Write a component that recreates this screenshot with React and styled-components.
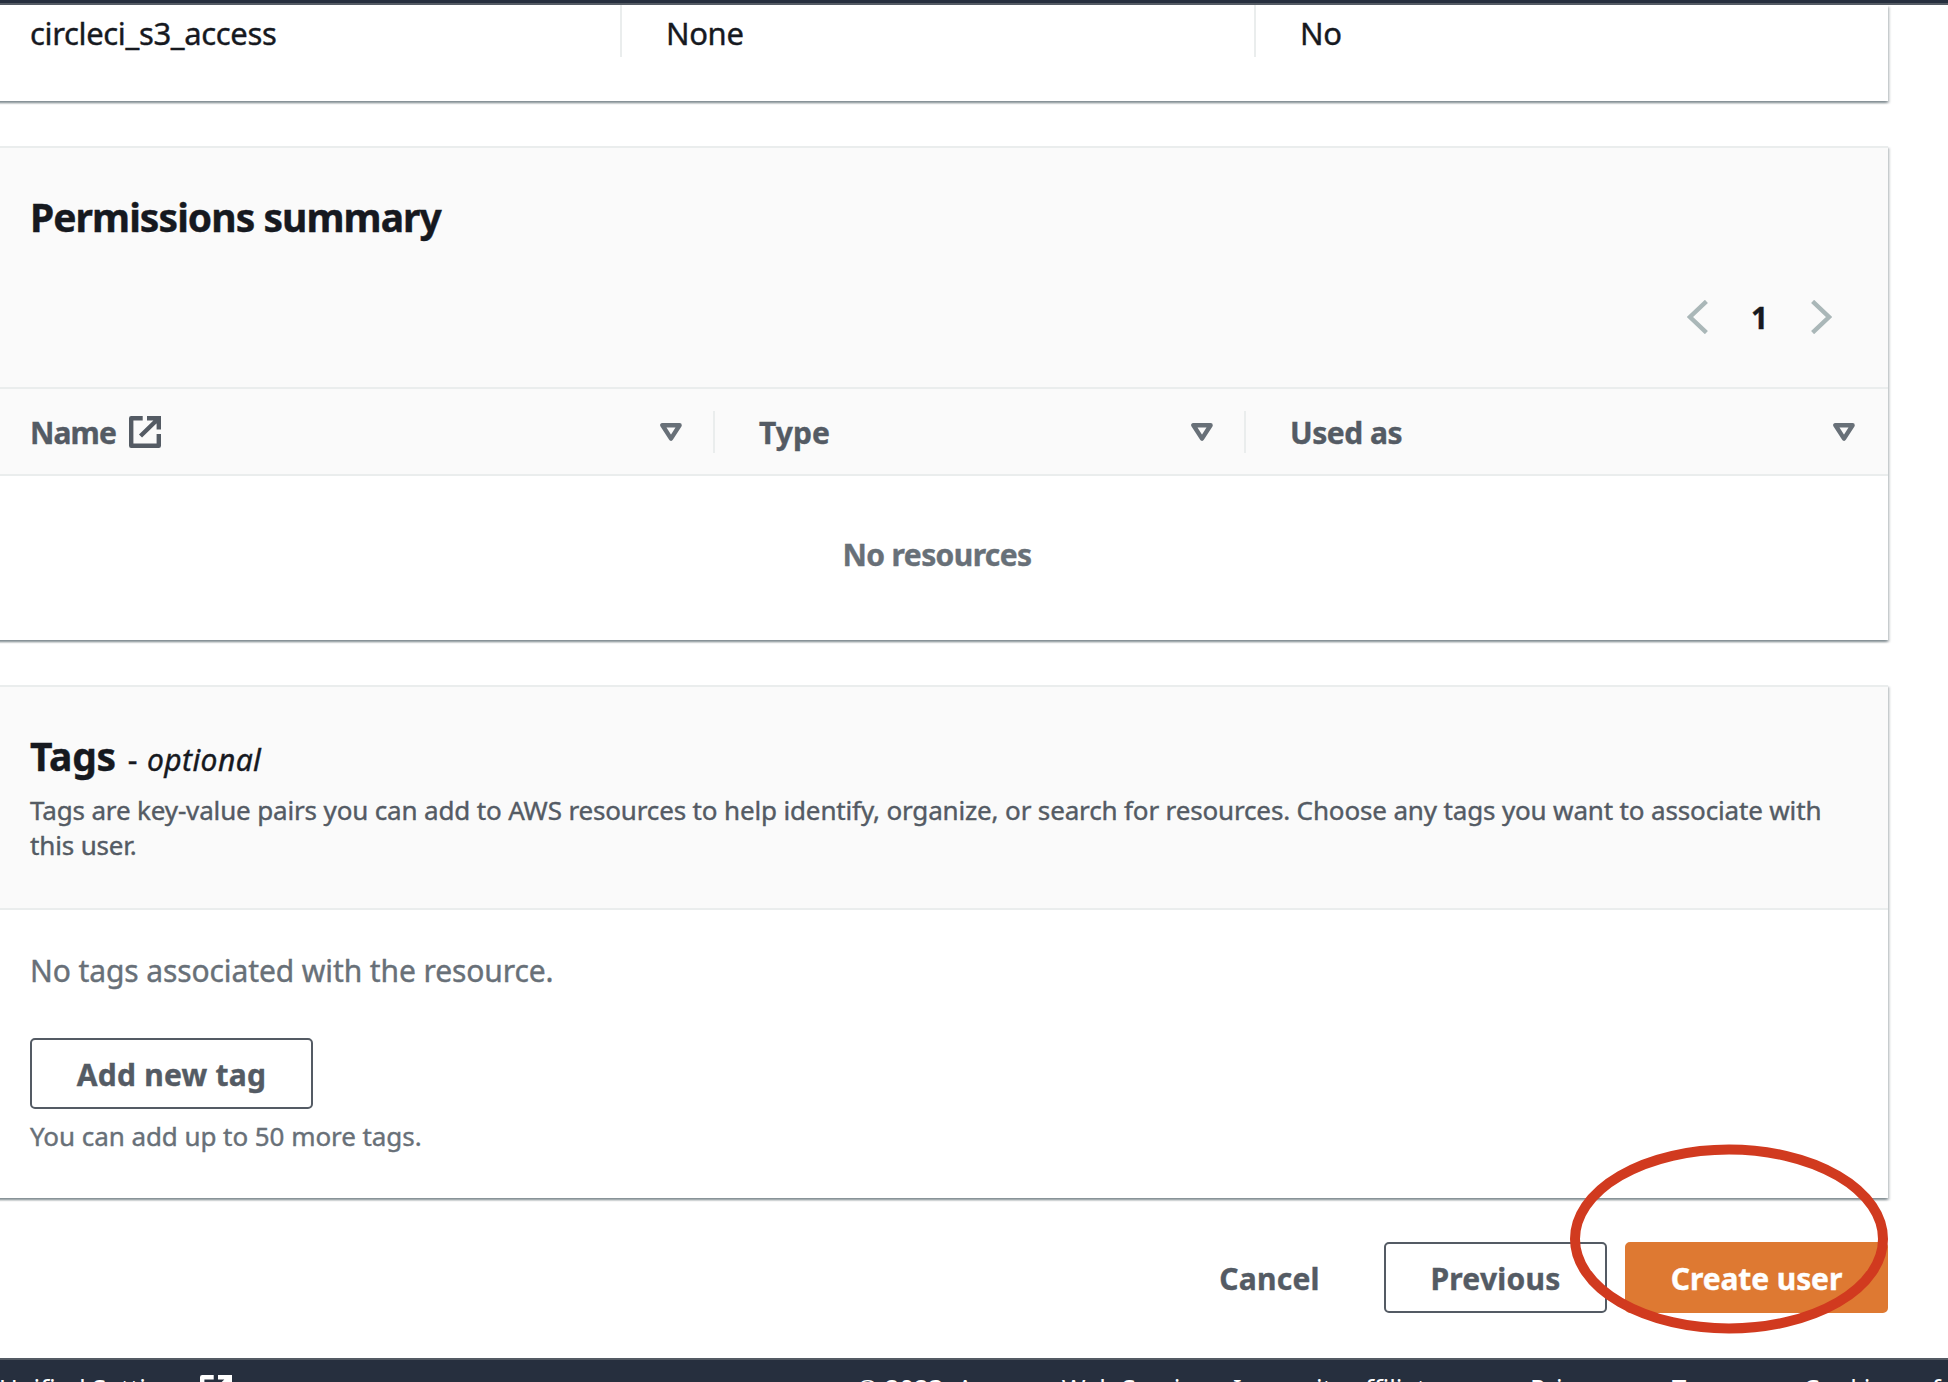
import React from 'react';
import styled, { createGlobalStyle } from 'styled-components';

const color = {
  ink: '#16191f',
  body: '#545b64',
  muted: '#687078',
  line: '#eaeded',
  navy: '#262f3e',
  header: '#fafafa',
  disabled: '#aab7b8',
  orange: '#de7932',
  red: '#d13a1f',
};

const GlobalStyle = createGlobalStyle`
  * { box-sizing: border-box; }
  body {
    margin: 0;
    background: #fff;
    color: ${color.ink};
    font-family: "Noto Sans", "Open Sans", sans-serif;
    font-size: 30px;
    line-height: 44px;
    -webkit-text-stroke: 0.4px currentColor;
  }
  h2, p { margin: 0; }
`;

const Page = styled.div`
  display: flex;
  flex-direction: column;
  width: 1948px;
  height: 1382px;
  overflow: hidden;
`;

const TopBar = styled.div`
  flex: none;
  height: 5px;
  background: ${color.navy};
  border-bottom: 2px solid ${color.body};
`;

/* The panels start a little past the left edge of the viewport. */
const Content = styled.main`
  flex: none;
  height: 1353px;
  width: 1902px;
  margin-left: -14px;
`;

const Panel = styled.section`
  height: ${(p) => p.$height}px;
  margin-bottom: ${(p) => p.$gap}px;
  background: #fff;
  border-top: ${(p) => (p.$open ? '0' : `2px solid ${color.line}`)};
  box-shadow:
    0 2px 2px 0 rgba(0, 28, 36, 0.3),
    2px 2px 2px 0 rgba(0, 28, 36, 0.15),
    -2px 2px 2px 0 rgba(0, 28, 36, 0.15);
`;

const PanelHeader = styled.header`
  height: ${(p) => p.$height}px;
  padding: 45px 56px 0 44px;
  background: ${color.header};
  border-bottom: 2px solid ${color.line};
`;

const Title = styled.h2`
  font-size: 39px;
  line-height: 48px;
  font-weight: 700;
  letter-spacing: ${(p) => p.$tracking}px;
`;

const Optional = styled.span`
  margin-left: 12px;
  font-size: 30px;
  font-weight: 400;
  letter-spacing: 0.4px;
  word-spacing: 1px;
`;

const Description = styled.p`
  width: 1830px;
  margin-top: 9px;
  color: ${color.body};
  font-size: 26px;
  line-height: 35px;
  letter-spacing: -0.15px;
`;

const SummaryRow = styled.div`
  display: grid;
  grid-template-columns: 634px 634px 1fr;
  height: 52px;
`;

const SummaryCell = styled.div`
  padding: 6px 0 0 44px;
  border-left: ${(p) => (p.$first ? '0' : `2px solid ${color.line}`)};
  font-size: 31px;
  letter-spacing: -0.35px;
`;

const Pagination = styled.div`
  display: flex;
  align-items: center;
  justify-content: flex-end;
  height: 40px;
  margin-top: 56px;
`;

const PageNumber = styled.span`
  width: 103px;
  padding-top: 2px;
  text-align: center;
  font-weight: 700;
`;

const TableHead = styled.div`
  display: grid;
  grid-template-columns: 727px 531px 1fr;
  align-items: center;
  height: 87px;
  padding-top: 1px;
  background: ${color.header};
  border-bottom: 2px solid ${color.line};
`;

const HeadCell = styled.div`
  display: flex;
  align-items: center;
  height: 42px;
  padding: 0 ${(p) => p.$right}px 0 44px;
  border-left: ${(p) => (p.$first ? '0' : `2px solid ${color.line}`)};
  color: ${color.body};
  font-weight: 700;
  letter-spacing: -0.5px;

  > svg { margin-left: auto; }
`;

const HeadLabel = styled.span`
  padding-top: 2px;
  letter-spacing: ${(p) => p.$tracking || -0.5}px;
`;

const NameLabel = styled.span`
  display: flex;
  align-items: center;
  gap: 13px;
`;

const EmptyState = styled.div`
  padding-top: 57px;
  color: ${color.muted};
  font-weight: 700;
  letter-spacing: -0.6px;
  text-align: center;
`;

const TagsBody = styled.div`
  display: flex;
  flex-direction: column;
  align-items: flex-start;
  padding: 39px 44px 0;
  color: ${color.muted};
`;

const TagsEmpty = styled.p`
  margin-bottom: 45px;
  letter-spacing: -0.1px;
`;

const Hint = styled.p`
  margin-top: 9px;
  font-size: 26px;
  line-height: 36px;
  letter-spacing: -0.06px;
`;

const Button = styled.button`
  flex: none;
  width: ${(p) => p.$width}px;
  height: 71px;
  padding: 2px 0 0;
  border: 2px solid ${(p) => (p.$primary ? color.orange : p.$link ? 'transparent' : color.body)};
  border-radius: 5px;
  background: ${(p) => (p.$primary ? color.orange : 'transparent')};
  color: ${(p) => (p.$primary ? '#fff' : color.body)};
  font: 700 30px/44px "Noto Sans", "Open Sans", sans-serif;
  letter-spacing: ${(p) => (p.$primary ? -0.1 : 0.25)}px;
`;

const Actions = styled.div`
  position: relative;
  display: flex;
  justify-content: flex-end;
  gap: 18px;
`;

const Highlight = styled.svg`
  position: absolute;
  right: 0;
  top: -98px;
  pointer-events: none;
`;

const Footer = styled.footer`
  flex: none;
  display: flex;
  height: 24px;
  padding-top: 11px;
  overflow: hidden;
  background: ${color.navy};
  border-top: 2px solid ${color.body};
  color: #fff;
  font-size: 25.6px;
  line-height: 36px;
  white-space: nowrap;
  -webkit-text-stroke: 0;
`;

const FooterLink = styled.span`
  flex: none;
  display: flex;
  align-items: flex-start;
  gap: 10px;
  width: ${(p) => p.$width}px;

  svg { margin-top: 4px; }
`;

const FooterSettings = styled(FooterLink)`
  margin-left: -1px;
`;

function ExternalIcon() {
  return (
    <svg width="32" height="32" viewBox="0 0 32 32" fill="none" stroke="currentColor" strokeWidth="4.4">
      <path d="M29.8 18V29.8H2.2V2.2H13.7" strokeLinejoin="round" />
      <path d="M18 2.2H29.8V13.6M11.5 20L29 3" />
    </svg>
  );
}

function SortIcon() {
  return (
    <svg width="22" height="18" viewBox="0 0 22 18" fill="none" stroke={color.muted} strokeWidth="4.4" strokeLinejoin="round">
      <path d="M2.4 2.2H19.6L11 15.6Z" />
    </svg>
  );
}

function Chevron({ next }) {
  return (
    <svg width="21" height="34" viewBox="0 0 21 34" fill="none" stroke={color.disabled} strokeWidth="4.4">
      <path d={next ? 'M1.6 1.4L18 17L1.6 32.6' : 'M19.4 1.4L3 17L19.4 32.6'} />
    </svg>
  );
}

export default function App() {
  return (
    <Page>
      <GlobalStyle />
      <TopBar />
      <Content>
        <Panel $open $height={96} $gap={45}>
          <SummaryRow>
            <SummaryCell $first>circleci_s3_access</SummaryCell>
            <SummaryCell>None</SummaryCell>
            <SummaryCell>No</SummaryCell>
          </SummaryRow>
        </Panel>

        <Panel $height={494} $gap={45}>
          <PanelHeader $height={241}>
            <Title $tracking={-0.95}>Permissions summary</Title>
            <Pagination>
              <Chevron />
              <PageNumber>1</PageNumber>
              <Chevron next />
            </Pagination>
          </PanelHeader>
          <TableHead>
            <HeadCell $first $right={31}>
              <NameLabel>
                <HeadLabel $tracking={-0.9}>Name</HeadLabel>
                <ExternalIcon />
              </NameLabel>
              <SortIcon />
            </HeadCell>
            <HeadCell $right={31}>
              <HeadLabel $tracking={0.1}>Type</HeadLabel>
              <SortIcon />
            </HeadCell>
            <HeadCell $right={33}>
              <HeadLabel>Used as</HeadLabel>
              <SortIcon />
            </HeadCell>
          </TableHead>
          <EmptyState>No resources</EmptyState>
        </Panel>

        <Panel $height={513} $gap={44}>
          <PanelHeader $height={223}>
            <Title $tracking={-0.3}>
              Tags<Optional>- <em>optional</em></Optional>
            </Title>
            <Description>
              Tags are key-value pairs you can add to AWS resources to help identify, organize, or search for
              resources. Choose any tags you want to associate with this user.
            </Description>
          </PanelHeader>
          <TagsBody>
            <TagsEmpty>No tags associated with the resource.</TagsEmpty>
            <Button $width={283}>Add new tag</Button>
            <Hint>You can add up to 50 more tags.</Hint>
          </TagsBody>
        </Panel>

        <Actions>
          <Button $link $width={193}>Cancel</Button>
          <Button $width={223}>Previous</Button>
          <Button $primary $width={263}>Create user</Button>
          <Highlight width="318" height="190" viewBox="0 0 318 190">
            <ellipse cx="159" cy="95" rx="154" ry="89.5" fill="none" stroke={color.red} strokeWidth="10" />
          </Highlight>
        </Actions>
      </Content>
      <Footer>
        <FooterSettings $width={858}>Unified Settings <ExternalIcon /></FooterSettings>
        <FooterLink $width={673}>© 2023, Amazon Web Services, Inc. or its affiliates.</FooterLink>
        <FooterLink $width={142}>Privacy</FooterLink>
        <FooterLink $width={131}>Terms</FooterLink>
        <FooterLink>Cookie preferences</FooterLink>
      </Footer>
    </Page>
  );
}
